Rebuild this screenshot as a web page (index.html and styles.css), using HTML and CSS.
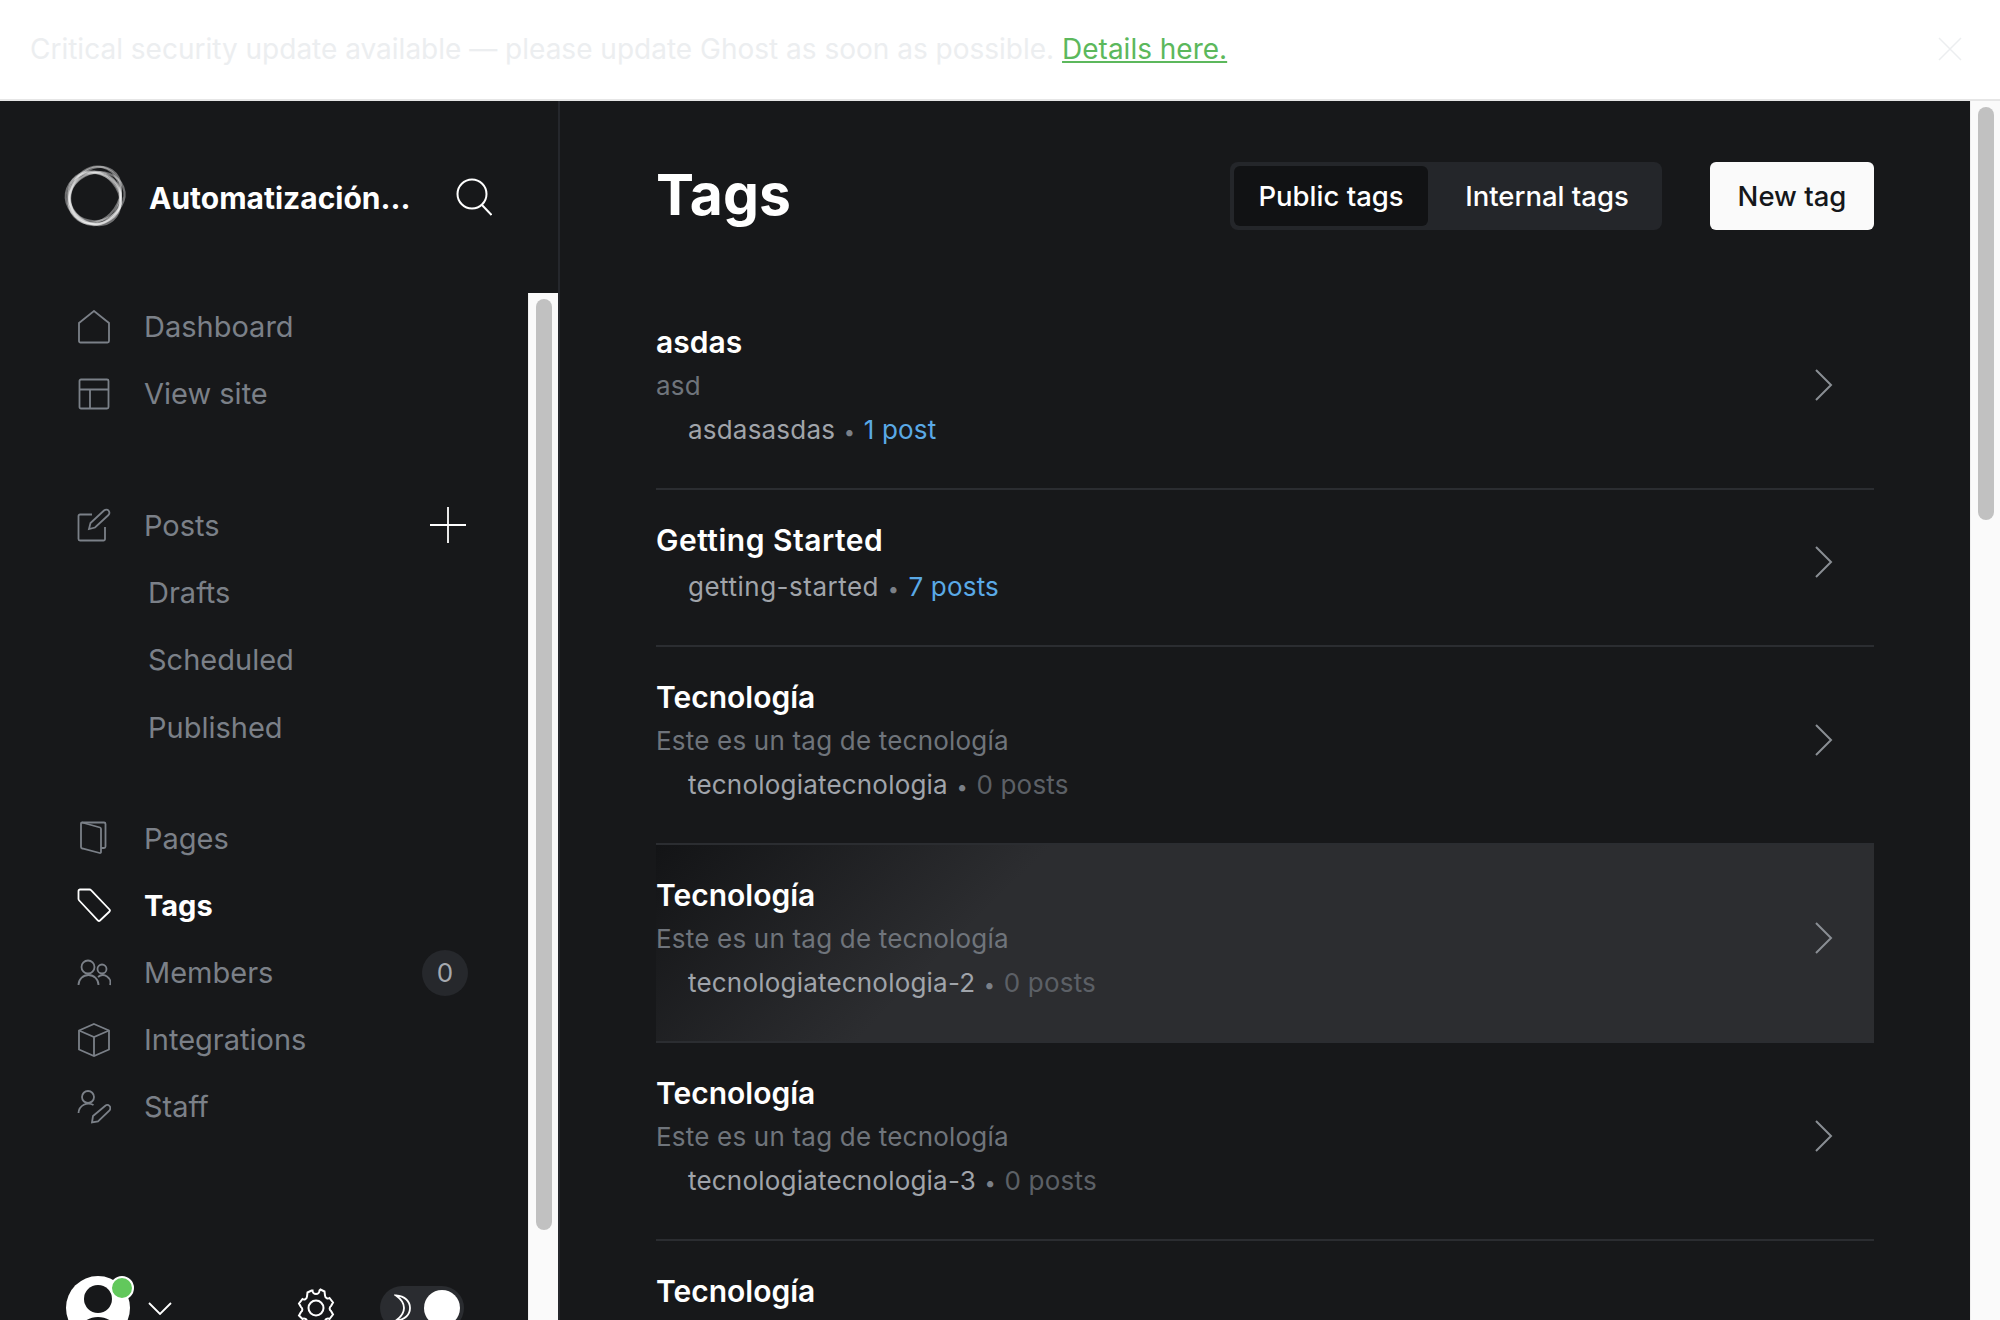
FILE: index.html
```html
<!DOCTYPE html>
<html lang="en">
  <head>
    <meta http-equiv="Content-Type" content="text/html;charset=UTF-8" />
    <title>Tags - Automatización</title>
    <link rel="stylesheet" href="styles.css">
  </head>
  <body>
    <div class="banner">
      <p>Critical security update available — please update Ghost as soon as possible. <a href="#">Details here.</a></p>
      <svg class="banner-close" viewBox="0 0 24 24"><path d="M1 1l22 22M23 1L1 23"/></svg>
    </div>

    <div class="app">
      <aside class="sidebar">
        <div class="brand">
          <svg class="brand-logo" viewBox="0 0 60 60">
            <circle cx="28.500" cy="31" r="26.500"/>
            <circle cx="29.500" cy="31.500" r="25.500"/>
            <ellipse cx="31" cy="28" rx="30" ry="24" transform="rotate(-55 30 30)"/>
            <ellipse cx="31" cy="29" rx="29.500" ry="25" transform="rotate(-75 30 30)"/>
            <ellipse cx="30" cy="32" rx="28.500" ry="24" transform="rotate(50 30 30)"/>
            <ellipse cx="28" cy="32" rx="28" ry="25" transform="rotate(20 30 30)"/>
            <ellipse cx="31" cy="30" rx="28" ry="24" transform="rotate(-20 30 30)"/>
          </svg>
          <span class="brand-name">Automatización...</span>
          <svg class="brand-search" viewBox="0 0 36 38"><circle cx="16" cy="16" r="14.500"/><path d="M26 27l9.500 10"/></svg>
        </div>

        <div class="sidebar-body">
          <div class="sidebar-scroll">
            <nav class="nav-group">
              <a class="nav-item" href="#">
                <svg class="nav-icon" viewBox="0 0 34 34"><path d="M2 13L17 1l15 12v18a1.500 1.500 0 0 1-1.500 1.500h-27A1.500 1.500 0 0 1 2 31z"/></svg>
                Dashboard
              </a>
              <a class="nav-item" href="#">
                <svg class="nav-icon" viewBox="0 0 34 34"><rect x="2.500" y="2.500" width="29" height="29" rx="1.500"/><path d="M2.500 12.500h29M13 12.500v19"/></svg>
                View site
              </a>
            </nav>

            <nav class="nav-group nav-posts">
              <a class="nav-item" href="#">
                <svg class="nav-icon" viewBox="0 0 34 34"><path d="M15 6.500H3A1.500 1.500 0 0 0 1.500 8v23A1.500 1.500 0 0 0 3 32.500h23.500A1.500 1.500 0 0 0 28 31V19"/><path d="M12 21l1.500-6L27 2.500c1.500-1.300 3.500-1.300 4.500 0s1.300 3 0 4.500L18 19.500z"/></svg>
                Posts
                <svg class="nav-plus" viewBox="0 0 36 36"><path d="M18 0v36M0 18h36"/></svg>
              </a>
              <a class="nav-item nav-sub" href="#">Drafts</a>
              <a class="nav-item nav-sub" href="#">Scheduled</a>
              <a class="nav-item nav-sub" href="#">Published</a>
            </nav>

            <nav class="nav-group nav-manage">
              <a class="nav-item" href="#">
                <svg class="nav-icon" viewBox="0 0 34 34"><path d="M5 1.500h22A1.500 1.500 0 0 1 28.500 3v22.500A1.500 1.500 0 0 1 27 27h-3"/><path d="M5 1.500L23 6.500A1.500 1.500 0 0 1 24 8v23a1 1 0 0 1-1.300 1L5.200 27.500A1.500 1.500 0 0 1 4 26V2.500A1 1 0 0 1 5 1.500z"/></svg>
                Pages
              </a>
              <a class="nav-item nav-active" href="#">
                <svg class="nav-icon" viewBox="0 0 34 34"><path d="M1.500 3A1.500 1.500 0 0 1 3 1.500h9.500a2 2 0 0 1 1.500.700L32.500 21.500a1.500 1.500 0 0 1 0 2L23 32.500a1.500 1.500 0 0 1-2 0L2.200 12.500A2.500 2.500 0 0 1 1.500 11z"/></svg>
                Tags
              </a>
              <a class="nav-item" href="#">
                <svg class="nav-icon" viewBox="0 0 34 34"><circle cx="11" cy="11" r="6.500"/><path d="M1.500 29a10 10 0 0 1 20 0"/><circle cx="25" cy="13" r="4.500"/><path d="M21 21a7.500 7.500 0 0 1 12 8"/></svg>
                Members
                <span class="nav-badge">0</span>
              </a>
              <a class="nav-item" href="#">
                <svg class="nav-icon" viewBox="0 0 34 34"><path d="M17 1l15 6.500v19L17 33 2 26.500v-19z"/><path d="M2 7.500L17 14l15-6.500M17 14v19"/></svg>
                Integrations
              </a>
              <a class="nav-item" href="#">
                <svg class="nav-icon" viewBox="0 0 34 34"><circle cx="11" cy="7" r="6"/><path d="M1.500 23a10 10 0 0 1 15-8"/><path d="M15 32.500l1-6.500L28 16c1.500-1.300 3.300-1.300 4.500 0s1 3 0 4.500L21 31.500z"/></svg>
                Staff
              </a>
            </nav>

            <div class="sidebar-foot">
              <div class="foot-user">
                <svg class="foot-avatar" viewBox="0 0 64 64">
                  <circle cx="32" cy="32" r="32" fill="#fff"/>
                  <circle cx="32" cy="23" r="14" fill="#17181a"/>
                  <path d="M8 64c2-14 12-23 24-23s22 9 24 23z" fill="#17181a"/>
                </svg>
                <span class="foot-dot"></span>
                <svg class="foot-caret" viewBox="0 0 24 13"><path d="M1 1l11 11L23 1"/></svg>
              </div>
              <svg class="foot-gear" viewBox="0 0 40 40">
                <circle cx="20" cy="20" r="7.500"/>
                <path d="M16.500 2.500a3 3 0 0 0 7 0l1-1 4 2 .5 4a3 3 0 0 0 4.500 2.500l3.500 4.500-2 3.500a3 3 0 0 0 0 5l2 3.500-3.500 4.500a3 3 0 0 0-4.500 2.500l-.5 4-4 2-1-1a3 3 0 0 0-7 0l-1 1-4-2-.5-4a3 3 0 0 0-4.500-2.500L3 27.500 5 24a3 3 0 0 0 0-5L3 15.500 6.500 11A3 3 0 0 0 11 8.500l.5-4 4-2z"/>
              </svg>
              <div class="foot-toggle">
                <svg class="foot-moon" viewBox="0 0 18 28"><path d="M2 1.500c9 .5 14 6 14 12.500s-5 12-14 12.500C7 23 10 18.500 10 14S7 5 2 1.500z"/></svg>
                <span class="foot-knob"></span>
              </div>
            </div>
          </div>
          <div class="scroll-track side-track"><span class="scroll-thumb"></span></div>
        </div>
      </aside>

      <main class="content">
        <header class="page-head">
          <h1>Tags</h1>
          <div class="tabs">
            <button class="tab tab-on">Public tags</button>
            <button class="tab">Internal tags</button>
          </div>
          <button class="btn-new">New tag</button>
        </header>

        <ol class="tag-list">
          <li class="tag-row">
            <div class="tag-text">
              <h3>asdas</h3>
              <p class="tag-desc">asd</p>
              <p class="tag-meta">asdasasdas <i>•</i> <span class="tag-count">1 post</span></p>
            </div>
            <svg class="tag-arrow" viewBox="0 0 18 32"><path d="M1 1l15 15L1 31"/></svg>
          </li>
          <li class="tag-row">
            <div class="tag-text">
              <h3 class="tag-wide">Getting Started</h3>
              <p class="tag-meta tag-wide">getting-started <i>•</i> <span class="tag-count">7 posts</span></p>
            </div>
            <svg class="tag-arrow" viewBox="0 0 18 32"><path d="M1 1l15 15L1 31"/></svg>
          </li>
          <li class="tag-row">
            <div class="tag-text">
              <h3>Tecnología</h3>
              <p class="tag-desc">Este es un tag de tecnología</p>
              <p class="tag-meta">tecnologiatecnologia <i>•</i> <span class="tag-zero">0 posts</span></p>
            </div>
            <svg class="tag-arrow" viewBox="0 0 18 32"><path d="M1 1l15 15L1 31"/></svg>
          </li>
          <li class="tag-row tag-hover">
            <div class="tag-text">
              <h3>Tecnología</h3>
              <p class="tag-desc">Este es un tag de tecnología</p>
              <p class="tag-meta">tecnologiatecnologia-2 <i>•</i> <span class="tag-zero">0 posts</span></p>
            </div>
            <svg class="tag-arrow" viewBox="0 0 18 32"><path d="M1 1l15 15L1 31"/></svg>
          </li>
          <li class="tag-row">
            <div class="tag-text">
              <h3>Tecnología</h3>
              <p class="tag-desc">Este es un tag de tecnología</p>
              <p class="tag-meta">tecnologiatecnologia-3 <i>•</i> <span class="tag-zero">0 posts</span></p>
            </div>
            <svg class="tag-arrow" viewBox="0 0 18 32"><path d="M1 1l15 15L1 31"/></svg>
          </li>
          <li class="tag-row">
            <div class="tag-text">
              <h3>Tecnología</h3>
            </div>
          </li>
        </ol>
      </main>

      <div class="scroll-track main-track"><span class="scroll-thumb"></span></div>
    </div>
  </body>
</html>
```

FILE: styles.css
```css
* {
  margin: 0;
  padding: 0;
  box-sizing: border-box;
}

body {
  font-family: "Inter", "Liberation Sans", sans-serif;
  height: 1320px;
  overflow: hidden;
  background-color: #17181a;
  color: #fff;
}

svg {
  fill: none;
  stroke: currentColor;
  flex: none;
}

/* top banner */

.banner {
  height: 101px;
  padding: 0 38px 1px 30px;
  display: flex;
  align-items: center;
  justify-content: space-between;
  background: #fff;
  border-bottom: 2px solid #e6e6e6;
}

.banner p {
  font-size: 28px;
  color: #eceef0;
}

.banner a {
  color: #5cb85c;
}

.banner-close {
  width: 24px;
  height: 24px;
  color: #eceef0;
  stroke-width: 1.5;
}

.app {
  display: flex;
  height: 1219px;
}

/* sidebar */

.sidebar {
  width: 560px;
  flex: none;
  display: flex;
  flex-direction: column;
  border-right: 2px solid #25272c;
}

.brand {
  height: 192px;
  flex: none;
  padding: 0 66px 0;
  display: flex;
  align-items: center;
}

.brand-logo {
  width: 60px;
  height: 60px;
  overflow: visible;
  color: rgba(255, 255, 255, 0.38);
  stroke-width: 2.2;
}

.brand-name {
  margin-left: 23px;
  padding-top: 2px;
  font-size: 30px;
  font-weight: 700;
}

.brand-search {
  width: 36px;
  height: 38px;
  margin-left: auto;
  stroke-width: 2;
}

.sidebar-body {
  flex: 1;
  display: flex;
  min-height: 0;
}

.sidebar-scroll {
  flex: 1;
  display: flex;
  flex-direction: column;
}

.nav-posts {
  margin-top: 64.5px;
}

.nav-manage {
  margin-top: 44px;
}

.nav-item {
  height: 67.2px;
  padding: 0 60px 0 77px;
  display: flex;
  align-items: center;
  gap: 33px;
  font-size: 29px;
  color: #7b8088;
  text-decoration: none;
}

.nav-sub {
  padding-left: 148px;
}

.nav-active {
  color: #fff;
  font-weight: 700;
}

.nav-icon {
  width: 34px;
  height: 34px;
  stroke-width: 1.8;
}

.nav-plus {
  width: 36px;
  height: 36px;
  margin-left: auto;
  margin-right: 2px;
  color: #fff;
  stroke-width: 1.8;
}

.nav-badge {
  width: 46px;
  height: 46px;
  margin-left: auto;
  border-radius: 50%;
  display: flex;
  align-items: center;
  justify-content: center;
  background: #26282c;
  color: #a5a9af;
  font-size: 26px;
}

.sidebar-foot {
  margin-top: 135px;
  padding-left: 66px;
  display: flex;
  align-items: center;
}

.foot-user {
  position: relative;
  display: flex;
  align-items: flex-end;
  width: 230px;
}

.foot-avatar {
  width: 64px;
  height: 64px;
  stroke: none;
}

.foot-dot {
  position: absolute;
  left: 44px;
  top: 0;
  width: 24px;
  height: 24px;
  border-radius: 50%;
  background: #62c85c;
  border: 2px solid #fff;
}

.foot-caret {
  width: 24px;
  height: 13px;
  margin: 0 0 25px 18px;
  stroke-width: 1.8;
}

.foot-gear {
  width: 40px;
  height: 40px;
  stroke-width: 2;
}

.foot-toggle {
  width: 84px;
  height: 44px;
  margin-left: 44px;
  padding: 0 4px 0 14px;
  border-radius: 22px;
  display: flex;
  align-items: center;
  justify-content: space-between;
  background: #2a2c30;
}

.foot-moon {
  width: 18px;
  height: 28px;
  stroke-width: 1.8;
}

.foot-knob {
  width: 36px;
  height: 36px;
  border-radius: 50%;
  background: #fff;
}

/* scrollbars */

.scroll-track {
  width: 30px;
  flex: none;
  background: #fafafa;
  border-left: 1px solid #efefef;
}

.scroll-thumb {
  display: block;
  width: 16px;
  border-radius: 8px;
  background: #c1c1c1;
}

.side-track {
  padding: 6px 0 0 7px;
}

.side-track .scroll-thumb {
  height: 931px;
}

.main-track {
  padding: 6px 0 0 7px;
}

.main-track .scroll-thumb {
  height: 413px;
}

/* main column */

.content {
  flex: 1;
  min-width: 0;
  padding: 61px 96px 0;
}

.page-head {
  height: 68px;
  display: flex;
  align-items: center;
}

.page-head h1 {
  font-size: 57px;
  font-weight: 700;
  margin-right: auto;
  padding-bottom: 3px;
}

.tabs {
  height: 68px;
  padding: 4px;
  display: flex;
  border-radius: 8px;
  background: #24262a;
}

.tab {
  width: 194px;
  border: none;
  border-radius: 6px;
  background: none;
  color: #fff;
  font: 500 27.5px "Inter", sans-serif;
}

.tab + .tab {
  width: 230px;
  padding-left: 8px;
}

.tab-on {
  background: #111214;
}

.btn-new {
  width: 164px;
  height: 68px;
  margin-left: 48px;
  border: none;
  border-radius: 6px;
  background: #fafafa;
  color: #15171a;
  font: 500 27.5px "Inter", sans-serif;
}

.tag-list {
  margin-top: 62px;
  list-style: none;
}

.tag-row {
  padding: 29px 41px 37px 0;
  display: flex;
  align-items: center;
  border-bottom: 2px solid #2b2d31;
}

.tag-hover {
  background: linear-gradient(315deg, #2c2d30 72%, #131416 100%);
}

.tag-text {
  flex: 1;
}

.tag-text h3 {
  font-size: 30px;
  font-weight: 600;
  line-height: 43px;
}

.tag-desc {
  margin-top: 2px;
  font-size: 26px;
  line-height: 40px;
  letter-spacing: 0.2px;
  color: #6f747b;
}

.tag-meta {
  margin-top: 3px;
  padding-left: 32px;
  font-size: 26px;
  line-height: 43px;
  letter-spacing: 0.2px;
  color: #a0a4aa;
}

.tag-desc + .tag-meta {
  margin-top: 2px;
}

.tag-text .tag-wide {
  letter-spacing: 0.5px;
}

.tag-meta i {
  margin: 0 1px;
  font-size: 20px;
  line-height: 0;
  font-style: normal;
  color: #7b8088;
}

.tag-count {
  letter-spacing: 0.2px;
  color: #5aa9e6;
}

.tag-zero {
  color: #5c6066;
}

.tag-arrow {
  width: 18px;
  height: 32px;
  margin-bottom: 3px;
  color: #8a8e94;
  stroke-width: 2;
}
```
